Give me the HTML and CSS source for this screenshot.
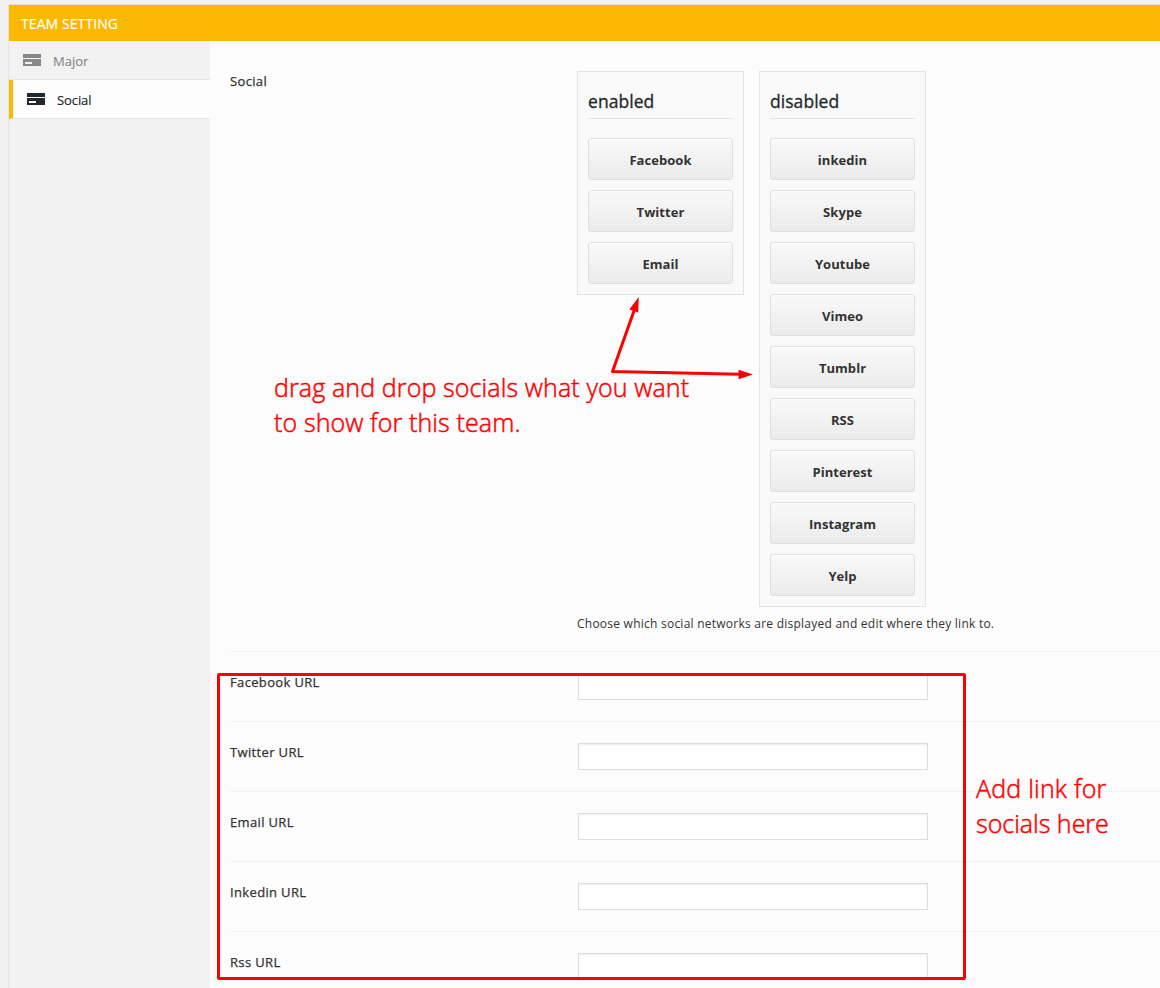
FILE: index.html
```html
<!DOCTYPE html>
<html lang="en">
<head>
<meta charset="utf-8">
<title>Team Setting</title>
<link rel="stylesheet" href="styles.css">
</head>
<body>
<div class="panel">
  <header class="bar">TEAM SETTING</header>
  <div class="body">
    <nav class="side">
      <a class="item"><svg class="card" viewBox="0 0 18 12"><path fill="currentColor" fill-rule="evenodd" d="M0 0h18v4H0zM0 5h18v7H0zM2 8v2h7V8z"/></svg><span>Major</span></a>
      <a class="item active"><svg class="card" viewBox="0 0 18 12"><path fill="currentColor" fill-rule="evenodd" d="M0 0h18v4H0zM0 5h18v7H0zM2 8v2h7V8z"/></svg><span>Social</span></a>
    </nav>
    <main class="main">
      <section class="row first">
        <div class="label">Social</div>
        <div class="field">
          <div class="lists">
            <div class="list">
              <h3>enabled</h3>
              <div class="btn">Facebook</div>
              <div class="btn">Twitter</div>
              <div class="btn">Email</div>
            </div>
            <div class="list">
              <h3>disabled</h3>
              <div class="btn">inkedin</div>
              <div class="btn">Skype</div>
              <div class="btn">Youtube</div>
              <div class="btn">Vimeo</div>
              <div class="btn">Tumblr</div>
              <div class="btn">RSS</div>
              <div class="btn">Pinterest</div>
              <div class="btn">Instagram</div>
              <div class="btn">Yelp</div>
            </div>
          </div>
          <p class="desc">Choose which social networks are displayed and edit where they link to.</p>
        </div>
      </section>
      <section class="row"><div class="label">Facebook URL</div><input class="input" type="text"></section>
      <section class="row"><div class="label">Twitter URL</div><input class="input" type="text"></section>
      <section class="row"><div class="label">Email URL</div><input class="input" type="text"></section>
      <section class="row"><div class="label">Inkedin URL</div><input class="input" type="text"></section>
      <section class="row"><div class="label">Rss URL</div><input class="input" type="text"></section>
    </main>
  </div>
</div>
<svg class="arrows" viewBox="0 0 160 90"><path d="M25 8L2.500 71.500L130 74.200" fill="none" stroke="#f00" stroke-width="3" stroke-linejoin="round"/><path fill="#f00" d="M28.700 -3L19.300 9.500L28.300 12.600zM143 74.500L128.500 69.800V79.200z"/></svg>
<div class="frame"></div>
<div class="note note-drag">drag and drop socials what you want<br>to show for this team.</div>
<div class="note note-link">Add link for<br><span class="tight">socials here</span></div>
</body>
</html>
```
FILE: styles.css
```css
* { box-sizing: border-box; }
body { margin: 0; height: 988px; overflow: hidden; position: relative; background: #f1f1f1; font: 13px/20px "Open Sans", "Noto Sans", sans-serif; color: #333; padding: 4px 0 0 8px; }
.panel { border: 1px solid #e3e3e3; border-right: 0; height: 1000px; background: #fcfcfc; }
.bar { height: 36px; background: #fbb800; color: #fff; padding: 9px 12px; font-size: 14px; letter-spacing: .08px; -webkit-text-stroke: .2px; }
.body { display: flex; height: 960px; }
.side { width: 201px; flex: none; background: #f2f2f2; }
.item { display: flex; align-items: center; height: 39px; padding: 2px 0 0 14px; border-bottom: 1px solid #e5e5e5; color: #888; gap: 12px; -webkit-text-stroke: .15px; }
.item.active { background: #fcfcfc; border-left: 4px solid #fbb800; color: #23282d; letter-spacing: -.1px; }
.card { width: 18px; height: 12px; flex: none; margin-top: -3px; }
.main { flex: 1; padding-left: 20px; }
.row { display: flex; height: 70px; padding-top: 20px; border-bottom: 1px solid #f1f1f1; }
.row.first { height: 611px; padding-top: 30px; }
.label { width: 347px; flex: none; letter-spacing: .35px; -webkit-text-stroke: .25px; }
.input { width: 350px; height: 27px; margin: 1px 0 0 1px; border: 1px solid #ddd; background: #fff; box-shadow: inset 0 1px 2px rgba(0,0,0,.07); }
.lists { display: flex; align-items: flex-start; gap: 15px; }
.list { width: 167px; border: 1px solid #e3e3e3; background: #f9f9f9; padding: 10px 10px 0; }
h3 { margin: 0 0 19px; height: 37px; padding-top: 9px; border-bottom: 1px solid #e5e5e5; font-size: 17.5px; line-height: 20px; font-weight: 400; letter-spacing: .05px; -webkit-text-stroke: .3px; color: #23282d; }
.btn { height: 42px; margin-bottom: 10px; border: 1px solid #dfdfdf; border-radius: 3px; background: linear-gradient(#f9f9f9, #ebebeb); box-shadow: inset 0 1px 0 #fff; text-align: center; font-weight: 700; letter-spacing: .05px; line-height: 42px; }
.desc { margin: 7px 0 0; font-size: 12px; letter-spacing: .24px; white-space: nowrap; }
.arrows { position: absolute; left: 610px; top: 300px; width: 160px; height: 90px; overflow: visible; }
.frame { position: absolute; left: 217px; top: 673px; width: 749px; height: 307px; border: 3px solid #f00; border-radius: 2px; }
.note { position: absolute; color: #f00; font-size: 25px; line-height: 35px; font-weight: 300; letter-spacing: .12px; -webkit-text-stroke: .5px #f00; white-space: nowrap; }
.note-drag { left: 274px; top: 370px; }
.note-link { left: 976px; top: 771px; letter-spacing: .22px; }
.tight { letter-spacing: 0; }
```
